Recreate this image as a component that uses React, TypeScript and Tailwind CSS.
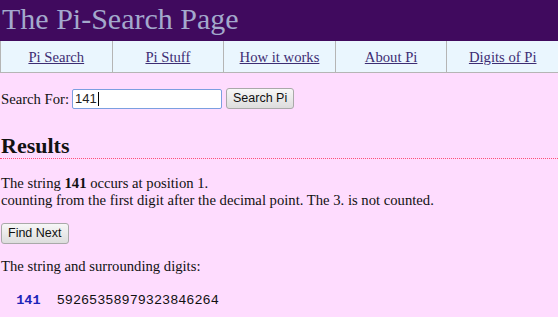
import { useState } from 'react'

const navLinks = ['Pi Search', 'Pi Stuff', 'How it works', 'About Pi', 'Digits of Pi']

export default function App() {
  const [query] = useState('141')

  return (
    <div className="min-h-screen bg-[#fedcfe] text-[#111] font-['Liberation_Serif','Times_New_Roman',serif] text-[14.67px]">
      {/* Header */}
      <div className="h-[41px] bg-[#400a5e] pl-[2px] pt-[2px]">
        <h1 className="text-[30px] leading-[34px] text-[#a3a9cc]">The Pi-Search Page</h1>
      </div>

      {/* Nav */}
      <div className="grid grid-cols-5 bg-[#eaf6fe] border-b border-[#b5b5b5]">
        {navLinks.map((label) => (
          <div key={label} className="h-[31px] border-l border-[#b5b5b5] flex items-center justify-center">
            <a href="#" className="underline text-[#3d2d73]">{label}</a>
          </div>
        ))}
      </div>

      <div className="pl-[1px]">
        {/* Search row */}
        <div className="mt-[15px] flex items-center h-[21px]">
          <span className="mt-[1px]">Search For:</span>
          <div className="ml-[3px] w-[150px] h-[20px] bg-white border border-[#7b9fe0] rounded-[2px] flex items-center pl-[2px] font-['Liberation_Sans',Arial,sans-serif] text-[13px] text-[#222]">
            {query}
            <span className="ml-[1px] w-px h-[14px] bg-black" />
          </div>
          <button className="ml-[4px] h-[21px] px-[6px] border border-[#a9a9a9] rounded-[3px] bg-gradient-to-b from-[#f7f7f7] to-[#dddddd] font-['Liberation_Sans',Arial,sans-serif] text-[12.5px] text-[#111]">
            Search Pi
          </button>
        </div>

        {/* Results */}
        <h2 className="mt-[24px] -ml-[1px] pl-[1px] text-[22px] leading-[25px] font-bold border-b border-dotted border-[#ff4f78]">
          Results
        </h2>

        <p className="mt-[16px] leading-[17px]">
          The string <b>141</b> occurs at position 1.
          <br />
          counting from the first digit after the decimal point. The 3. is not counted.
        </p>

        <button className="mt-[14px] h-[21px] px-[6px] border border-[#a9a9a9] rounded-[3px] bg-gradient-to-b from-[#f7f7f7] to-[#dddddd] font-['Liberation_Sans',Arial,sans-serif] text-[12.5px] text-[#111]">
          Find Next
        </button>

        <p className="mt-[14px] leading-[17px]">The string and surrounding digits:</p>

        <pre className="mt-[17px] -ml-[1px] leading-[17px] text-[13.5px] font-['Liberation_Mono','Courier_New',monospace]">
          {'  '}
          <b className="text-[#1d24b8]">141</b>
          {'  59265358979323846264'}
        </pre>
      </div>
    </div>
  )
}
